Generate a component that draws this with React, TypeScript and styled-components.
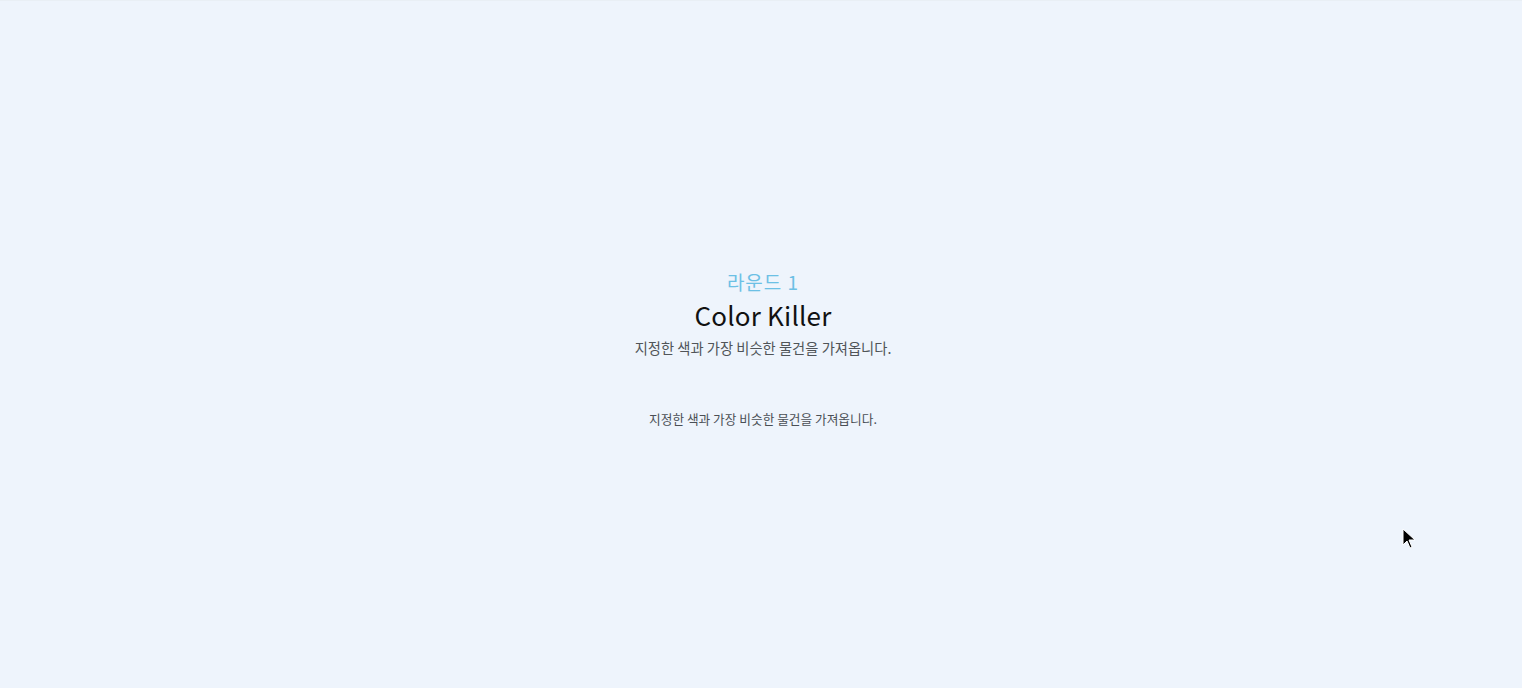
import React from "react";
import styled, { createGlobalStyle } from "styled-components";

const GlobalStyle = createGlobalStyle`
  html, body {
    margin: 0;
    padding: 0;
    background-color: #eef4fc;
    font-family: "Noto Sans CJK KR", "Noto Sans", sans-serif;
  }
`;

const Page = styled.div`
  position: relative;
  height: 688px;
  width: 100vw;
  overflow: hidden;
  display: flex;
  flex-direction: column;
  align-items: center;
  padding: 268px 0 0 4px;
  box-sizing: border-box;
  border-top: 1px solid #e9eff5;
`;

const Round = styled.div`
  font-size: 19px;
  line-height: 26px;
  color: #6cc0e5;
  letter-spacing: 1px;
`;

const Title = styled.h1`
  margin: 3px 0 0;
  font-size: 26px;
  line-height: 34px;
  font-weight: 400;
  color: #111;
  letter-spacing: 0.2px;
`;

const Desc = styled.p<{ $small?: boolean }>`
  margin: ${(p) => (p.$small ? "50px 0 0" : "5px 0 0")};
  font-size: ${(p) => (p.$small ? "12.7px" : "14.3px")};
  line-height: ${(p) => (p.$small ? "20px" : "22px")};
  color: ${(p) => (p.$small ? "#4a4f55" : "#505458")};
`;

const Cursor = styled.svg`
  position: absolute;
  left: 1402px;
  top: 527px;
`;

function App() {
  return (
    <Page>
      <GlobalStyle />
      <Round>라운드 1</Round>
      <Title>Color Killer</Title>
      <Desc>지정한 색과 가장 비슷한 물건을 가져옵니다.</Desc>
      <Desc $small>지정한 색과 가장 비슷한 물건을 가져옵니다.</Desc>
      <Cursor width="14" height="21" viewBox="0 0 14 21">
        <path d="M1 1 L1 17 L5 13 L8 20 L10 19 L7 12 L13 12 Z" fill="#000" stroke="#fff" strokeWidth="1" />
      </Cursor>
    </Page>
  );
}

export default App;
